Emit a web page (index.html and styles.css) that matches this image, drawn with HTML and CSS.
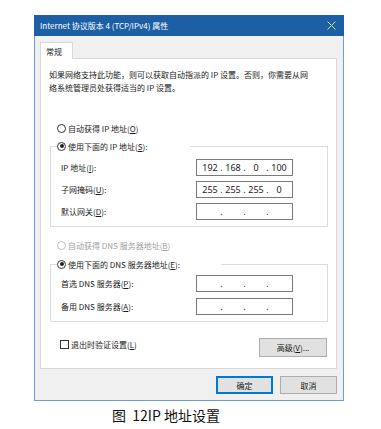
FILE: index.html
```html
<!DOCTYPE html>
<html lang="zh-CN">
<head>
  <meta charset="UTF-8">
  <title>IP 地址设置</title>
  <link rel="stylesheet" href="styles.css">
</head>
<body>
  <div class="window">
    <div class="titlebar">
      <span>Internet 协议版本 4 (TCP/IPv4) 属性</span>
      <svg class="close" width="9" height="9" viewBox="0 0 9 9"><path d="M0.5 0.5L8.5 8.5M8.5 0.5L0.5 8.5" stroke="#c9d9ee" stroke-width="1"/></svg>
    </div>
    <div class="body">
      <div class="tab">常规</div>
      <div class="panel">
        <p class="desc">如果网络支持此功能，则可以获取自动指派的 IP 设置。否则，你需要从网<br>络系统管理员处获得适当的 IP 设置。</p>

        <div class="radio first"><span class="dot"></span>自动获得 IP 地址(<u>O</u>)</div>
        <fieldset class="group">
          <legend class="legend-ip"><span class="radio"><span class="dot on"></span>使用下面的 IP 地址(<u>S</u>):</span></legend>
          <div class="row"><span>IP 地址(<u>I</u>):</span>
            <div class="ip"><span>192</span><i>.</i><span>168</span><i>.</i><span>0</span><i>.</i><span>100</span></div></div>
          <div class="row"><span>子网掩码(<u>U</u>):</span>
            <div class="ip"><span>255</span><i>.</i><span>255</span><i>.</i><span>255</span><i>.</i><span>0</span></div></div>
          <div class="row"><span>默认网关(<u>D</u>):</span>
            <div class="ip"><span></span><i>.</i><span></span><i>.</i><span></span><i>.</i><span></span></div></div>
        </fieldset>

        <div class="radio disabled"><span class="dot"></span>自动获得 DNS 服务器地址(<u>B</u>)</div>
        <fieldset class="group dns">
          <legend class="legend-dns"><span class="radio"><span class="dot on"></span>使用下面的 DNS 服务器地址(<u>E</u>):</span></legend>
          <div class="row"><span>首选 DNS 服务器(<u>P</u>):</span>
            <div class="ip"><span></span><i>.</i><span></span><i>.</i><span></span><i>.</i><span></span></div></div>
          <div class="row"><span>备用 DNS 服务器(<u>A</u>):</span>
            <div class="ip"><span></span><i>.</i><span></span><i>.</i><span></span><i>.</i><span></span></div></div>
        </fieldset>

        <div class="bottom">
          <div class="check"><span class="box"></span>退出时验证设置(<u>L</u>)</div>
          <div class="btn adv">高级(<u>V</u>)...</div>
        </div>
      </div>
      <div class="actions">
        <div class="btn ok">确定</div>
        <div class="btn">取消</div>
      </div>
    </div>
  </div>
  <p class="caption">图&nbsp; 12IP 地址设置</p>
</body>
</html>
```

FILE: styles.css
```css
body {
  margin: 0;
  background: #fff;
  font-family: "Noto Sans CJK SC", "Noto Sans", sans-serif;
  font-size: 8px;
  color: #1a1a1a;
}
.window {
  margin: 15px 0 0 34px;
  width: 308px;
  border: 1px solid #6c9ed3;
  border-top: none;
  background: #f0f0f0;
}
.titlebar {
  margin: 0 -1px;
  height: 21px;
  background: #1c5fa5;
  color: #fff;
  display: flex;
  align-items: center;
  justify-content: space-between;
  padding: 0 8px 0 6px;
  font-size: 8px;
}
.close {
  display: block;
}
.body {
  padding: 6px 6px 6px 5px;
}
.tab {
  width: 33px;
  height: 17px;
  box-sizing: border-box;
  background: #fff;
  border: 1px solid #d9d9d9;
  border-bottom: none;
  padding: 3px 0 0 5px;
  position: relative;
  z-index: 1;
  margin-bottom: -1px;
}
.panel {
  background: #fff;
  border: 1px solid #d9d9d9;
  padding: 0 0 11px;
}
.desc {
  margin: 9px 8px 0 8px;
  line-height: 13px;
  white-space: nowrap;
}
.radio {
  display: flex;
  align-items: center;
  height: 12px;
  white-space: nowrap;
}
.radio.first {
  margin: 28px 0 6px 16px;
}
.radio.disabled {
  margin: 12px 0 7px 16px;
  color: #a0a0a0;
}
.dot {
  width: 9px;
  height: 9px;
  box-sizing: border-box;
  border: 1px solid #333;
  border-radius: 50%;
  margin-right: 2px;
  position: relative;
}
.disabled .dot {
  border-color: #bcbcbc;
}
.dot.on::after {
  content: "";
  position: absolute;
  left: 1.5px;
  top: 1.5px;
  width: 4px;
  height: 4px;
  border-radius: 50%;
  background: #222;
}
.group {
  margin: 0 8px 0 9px;
  border: 1px solid #dcdcdc;
  padding: 7px 34px 6px 10px;
}
.group.dns {
  padding-top: 5px;
}
.group legend {
  padding: 0;
  margin-left: -4px;
}
.legend-ip {
  width: 133px;
}
.legend-dns {
  width: 164px;
}
.row {
  display: flex;
  justify-content: space-between;
  align-items: center;
  margin-bottom: 5px;
}
.dns .row {
  margin-bottom: 6px;
}
.row:last-child,
.dns .row:last-child {
  margin-bottom: 0;
}
.ip {
  width: 97px;
  height: 17px;
  box-sizing: border-box;
  border: 1px solid #7a7a7a;
  display: grid;
  grid-template-columns: 20px 3px 20px 3px 20px 3px 20px;
  padding-left: 3px;
  align-items: center;
  font-family: "Noto Sans", sans-serif;
  font-size: 9px;
  text-align: center;
  line-height: 15px;
}
.ip i {
  font-style: normal;
}
.bottom {
  display: flex;
  justify-content: space-between;
  align-items: flex-start;
  margin: 16px 9px 0 19px;
}
.check {
  display: flex;
  align-items: center;
  height: 12px;
}
.box {
  width: 9px;
  height: 9px;
  box-sizing: border-box;
  border: 1px solid #333;
  margin-right: 2px;
}
.btn {
  width: 57px;
  height: 18px;
  box-sizing: border-box;
  background: #e1e1e1;
  border: 1px solid #adadad;
  display: flex;
  align-items: center;
  justify-content: center;
}
.btn.adv {
  width: 68px;
  height: 19px;
}
.actions {
  display: flex;
  justify-content: flex-end;
  gap: 7px;
  margin-top: 7px;
}
.btn.ok {
  border: 1px solid #0078d7;
  box-shadow: inset 0 0 0 1px #0078d7;
}
.caption {
  margin: 5px 0 0 112px;
  font-size: 14px;
  line-height: 18px;
  color: #111;
}
```
